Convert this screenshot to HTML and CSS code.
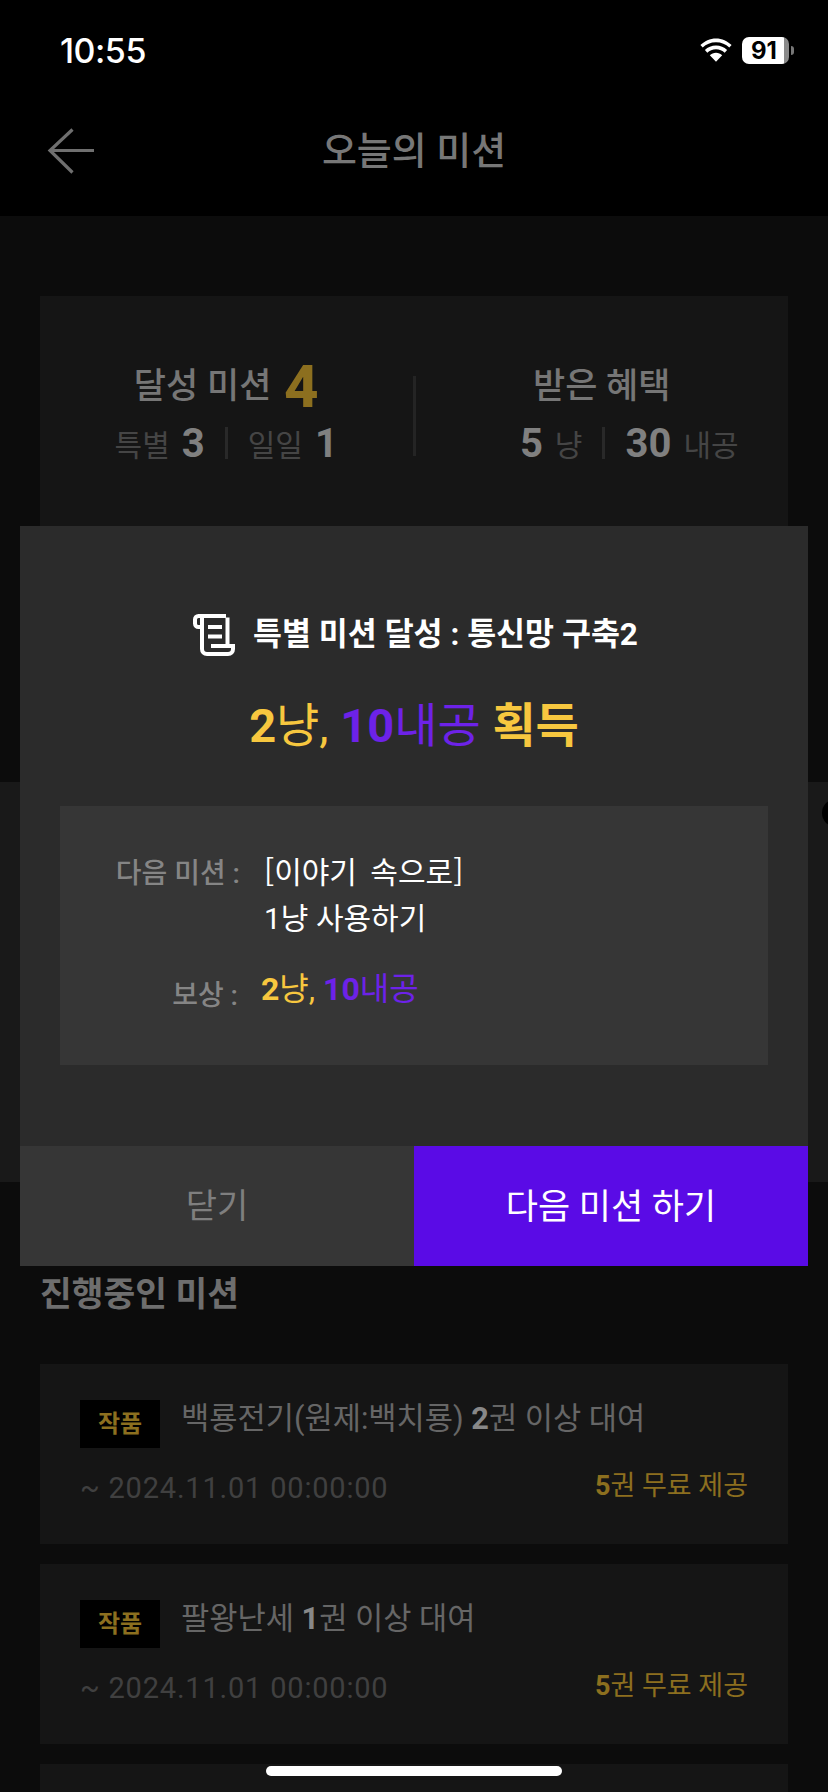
FILE: index.html
```html
<!DOCTYPE html>
<html lang="ko">
<head>
<meta charset="utf-8">
<title>오늘의 미션</title>
<link rel="stylesheet" href="styles.css">
</head>
<body>
<div class="screen">
  <header class="top">
    <div class="status">
      <span class="time">10:55</span>
      <div class="status-icons">
        <svg class="wifi" viewBox="0 0 32 24" width="32" height="24"><path d="M16 4.200c5.300 0 9.900 2 13.300 5.400l2.300-2.500C27.500 2.900 22 .4 16 .4S4.500 2.900.4 7.100l2.300 2.500C6.100 6.200 10.700 4.200 16 4.200z" fill="#fff"/><path d="M16 11.200c3.400 0 6.400 1.300 8.700 3.500l2.400-2.600C24.200 9.300 20.300 7.600 16 7.600S7.800 9.300 4.900 12.100l2.400 2.600c2.300-2.200 5.300-3.500 8.700-3.500z" fill="#fff"/><path d="M16 14.800c-2.400 0-4.500.9-6.200 2.400L16 23.800l6.200-6.600c-1.700-1.500-3.800-2.400-6.200-2.400z" fill="#fff"/></svg>
        <div class="battery"><span class="battery-level">91</span></div>
        <span class="battery-cap"></span>
      </div>
    </div>
    <div class="nav">
      <svg class="back" viewBox="0 0 48 46" width="48" height="46"><path d="M47 22.500H3M25.500 1.500 3 22.500l22.500 22" fill="none" stroke="#6f6f6f" stroke-width="3.200"/></svg>
      <h1 class="nav-title">오늘의 미션</h1>
    </div>
  </header>

  <main class="page">
    <section class="summary">
      <div class="stat">
        <div class="stat-head">달성 미션 <b class="stat-big">4</b></div>
        <div class="stat-sub">
          <span>특별</span><b>3</b><i class="bar"></i><span>일일</span><b>1</b>
        </div>
      </div>
      <i class="summary-rule"></i>
      <div class="stat">
        <div class="stat-head">받은 혜택</div>
        <div class="stat-sub stat-sub-shift">
          <b>5</b><span>냥</span><i class="bar"></i><b>30</b><span>내공</span>
        </div>
      </div>
    </section>

    <section class="band"><span class="band-peek"></span></section>

    <section class="progress">
      <h2 class="progress-title">진행중인 미션</h2>
      <article class="mission">
        <div class="mission-top">
          <span class="tag">작품</span>
          <p class="mission-name">백룡전기(원제:백치룡) <b>2</b>권 이상 대여</p>
        </div>
        <div class="mission-bottom">
          <span class="date">~ 2024.11.01 00:00:00</span>
          <span class="prize"><b>5</b>권 무료 제공</span>
        </div>
      </article>
      <article class="mission">
        <div class="mission-top">
          <span class="tag">작품</span>
          <p class="mission-name">팔왕난세 <b>1</b>권 이상 대여</p>
        </div>
        <div class="mission-bottom">
          <span class="date">~ 2024.11.01 00:00:00</span>
          <span class="prize"><b>5</b>권 무료 제공</span>
        </div>
      </article>
      <article class="mission"></article>
    </section>
  </main>

  <div class="modal">
    <div class="modal-body">
      <div class="modal-head">
        <svg class="scroll" viewBox="0 0 42 42" width="42" height="42"><path d="M33 2H5.500C3.500 2 2 3.500 2 5.500v4C2 11.500 3.500 13 5.500 13H9M9 3v32c0 3 2 5 5 5h21c3 0 5-2 5-5v-3H18M34.500 3.500V31" fill="none" stroke="#fff" stroke-width="4"/><path d="M15 13h14M15 22.500h14" fill="none" stroke="#fff" stroke-width="4"/></svg>
        <span class="modal-title">특별 미션 달성 : 통신망 구축2</span>
      </div>
      <p class="modal-reward"><span class="gold"><b>2</b>냥,</span> <span class="violet"><b>10</b>내공</span> <b class="gold">획득</b></p>
      <div class="next">
        <div class="next-row">
          <span class="next-label">다음 미션 :</span>
          <p class="next-value"><span class="next-quest">[이야기 속으로]</span><br>1냥 사용하기</p>
        </div>
        <div class="next-row next-row-reward">
          <span class="next-label next-label-reward">보상 :</span>
          <p class="next-value next-reward"><span class="gold"><b>2</b>냥,</span> <span class="violet"><b>10</b>내공</span></p>
        </div>
      </div>
    </div>
    <div class="modal-actions">
      <button class="btn btn-close" type="button">닫기</button>
      <button class="btn btn-next" type="button">다음 미션 하기</button>
    </div>
  </div>

  <span class="home-bar"></span>
</div>
</body>
</html>
```
FILE: styles.css
```css
* { box-sizing: border-box; }
html, body { margin: 0; padding: 0; background: #0c0c0c; }
body { font-family: Roboto, "Noto Sans CJK KR", sans-serif; }
p, h1, h2 { margin: 0; }
i { font-style: normal; }

.screen { position: relative; width: 828px; height: 1792px; overflow: hidden; background: #0c0c0c; }

/* top */
.top { height: 216px; background: #000; }
.status { height: 96px; padding: 34px 34px 0 60px; display: flex; justify-content: space-between; align-items: flex-start; }
.time { font-family: Inter, sans-serif; font-size: 34px; line-height: 34px; font-weight: 500; color: #fff; letter-spacing: -0.5px; }
.status-icons { display: flex; align-items: center; height: 32px; }
.wifi { margin-right: 10px; }
.battery { width: 47px; height: 27px; border-radius: 7px; background: linear-gradient(90deg, #fff 0, #fff 90%, #8a8a8a 90%); display: flex; align-items: center; justify-content: center; }
.battery-level { font-family: Inter, sans-serif; font-size: 24px; line-height: 27px; font-weight: 700; color: #000; padding-right: 3px; }
.battery-cap { width: 3px; height: 9px; margin-left: 2px; background: #777; border-radius: 0 3px 3px 0; }
.nav { position: relative; height: 120px; display: flex; align-items: center; justify-content: center; }
.back { position: absolute; left: 47px; top: 32px; }
.nav-title { font-size: 38px; line-height: 50px; font-weight: 500; color: #777; margin-top: -10px; }

/* summary */
.summary { margin: 80px 40px 0; height: 244px; background: #151515; display: grid; grid-template-columns: 1fr 3px 1fr; }
.stat { display: flex; flex-direction: column; align-items: center; padding-top: 60px; }
.stat-head { height: 62px; display: flex; align-items: center; gap: 4px; font-size: 35px; line-height: 62px; font-weight: 500; color: #767676; white-space: pre; }
.stat-big { font-size: 60px; line-height: 62px; font-weight: 800; color: #8c6f1f; }
.stat-sub { margin-top: 3px; height: 44px; display: flex; align-items: center; gap: 12px; font-size: 30px; color: #454545; }
.stat-sub b { font-size: 40px; font-weight: 700; color: #808080; }
.stat-sub-shift { margin-left: 55px; }
.bar { width: 3px; height: 32px; margin: 0 8px; background: #292929; }
.summary-rule { width: 3px; height: 80px; margin-top: 80px; background: #242424; }

/* band behind the dialog */
.band { position: relative; margin-top: 242px; height: 400px; background: #191919; overflow: hidden; }
.band-peek { position: absolute; left: 822px; top: 17px; width: 40px; height: 28px; border-radius: 14px; background: #000; }

/* missions */
.progress { padding: 87px 40px 0; }
.progress-title { font-size: 34.500px; line-height: 50px; font-weight: 700; color: #6e6e6e; }
.mission { height: 180px; margin-top: 20px; padding: 36px 40px 0; background: #151515; }
.progress-title + .mission { margin-top: 45px; }
.mission-top { display: flex; gap: 21px; align-items: flex-start; }
.tag { width: 80px; height: 48px; background: #000; color: #8c6f1f; font-size: 24px; line-height: 48px; font-weight: 700; text-align: center; }
.mission-name { font-size: 30.700px; line-height: 36px; color: #666; padding-top: 1px; }
.mission-name b { color: #888; font-weight: 700; }
.mission-bottom { display: flex; justify-content: space-between; align-items: center; margin-top: 20px; }
.date { font-size: 29px; line-height: 40px; color: #404040; letter-spacing: 0.8px; }
.prize { font-size: 27px; line-height: 40px; color: #8c6f1f; margin-top: -4px; }

/* dialog */
.modal { position: absolute; left: 20px; top: 526px; width: 788px; height: 740px; background: #2b2b2b; display: flex; flex-direction: column; }
.modal-body { flex: 1; padding: 88px 40px 0; }
.modal-head { display: flex; align-items: center; justify-content: center; gap: 18px; height: 42px; margin-left: 3px; }
.scroll { flex: none; }
.modal-title { font-size: 31.500px; line-height: 42px; font-weight: 700; color: #fff; }
.modal-reward { margin-top: 37px; text-align: center; font-size: 47px; line-height: 66px; color: #fff; }
.gold { color: #f7c73f; }
.violet { color: #6d22e8; }
.next { margin-top: 47px; height: 259px; background: #363636; padding: 41px 0 0; }
.next-row { display: flex; }
.next-label { width: 180px; text-align: right; font-size: 28px; line-height: 54px; font-weight: 500; color: #858585; white-space: nowrap; }
.next-label-reward { padding-right: 2px; line-height: 56px; }
.next-value { margin-left: 24px; font-size: 30px; line-height: 46px; color: #fff; }
.next-quest { font-family: "Noto Sans CJK KR", sans-serif; word-spacing: 5px; }
.next-row-reward { margin-top: 26px; }
.next-reward { margin-left: 21px; font-size: 32px; line-height: 42px; }
.modal-actions { height: 120px; display: flex; }
.btn { flex: 1; border: 0; padding: 0 0 6px; font-family: inherit; font-size: 34px; }
.btn-close { background: #363636; color: #7f7f7f; }
.btn-next { background: #5a0be6; color: #fff; font-size: 35px; }

.home-bar { position: absolute; left: 266px; top: 1766px; width: 296px; height: 10px; border-radius: 5px; background: #fff; }
```
